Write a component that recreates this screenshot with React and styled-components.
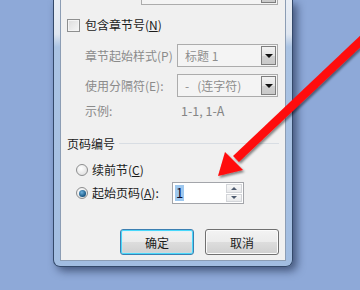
import React from 'react';
import styled, { createGlobalStyle } from 'styled-components';

const GlobalStyle = createGlobalStyle`
    html, body {
        margin: 0;
        padding: 0;
    }
    body {
        font-family: "Microsoft YaHei", "Noto Sans CJK SC", "Noto Sans", sans-serif;
        font-size: 12px;
    }
`;

const Desktop = styled.div`
    position: relative;
    width: 360px;
    height: 290px;
    overflow: hidden;
    background: #8ea9d8;
    padding-left: 53px;
    box-sizing: border-box;
    display: flex;
    align-items: flex-start;
`;

const Window = styled.div`
    width: 240px;
    height: 267px;
    box-sizing: border-box;
    border: 1px solid #34496a;
    border-top: none;
    border-radius: 0 0 7px 7px;
    padding: 0 6px 5px;
    background: linear-gradient(180deg, #e9eef5 0, #dfe6f0 34px, #aac3e3 47px, #a2bde1 100%);
    box-shadow: 4px 4px 9px rgba(10, 20, 50, 0.55);
`;

const Panel = styled.div`
    height: 261px;
    box-sizing: border-box;
    background: #f0f0f0;
    border: 1px solid #8c9db4;
    border-top: none;
    padding: 0 6px;
    display: flex;
    flex-direction: column;
    overflow: hidden;
    color: #1b1b1b;
`;

const Combo = styled.div`
    box-sizing: border-box;
    height: ${({ $h }) => $h || 23}px;
    width: ${({ $w }) => ($w ? `${$w}px` : 'auto')};
    margin-left: ${({ $ml }) => $ml || 0}px;
    margin-top: ${({ $mt }) => $mt || 0}px;
    border: 1px solid #acacac;
    background: #f4f4f4;
    color: #8e8e8e;
    display: flex;
    align-items: center;
    justify-content: space-between;
    padding-left: 7px;
    line-height: 1;
`;

const DropButton = styled.div`
    width: 15px;
    align-self: stretch;
    margin: 1px;
    box-sizing: border-box;
    border: 1px solid #7e7e7e;
    background: linear-gradient(180deg, #f2f2f2 0%, #e4e4e4 50%, #d0d0d0 51%, #c9c9c9 100%);
    display: flex;
    align-items: center;
    justify-content: center;

    &::after {
        content: '';
        border-left: 4px solid transparent;
        border-right: 4px solid transparent;
        border-top: 4px solid #111;
    }
`;

const CheckRow = styled.label`
    display: flex;
    align-items: center;
    gap: 5px;
    height: 16px;
    margin-top: 12px;
`;

const CheckBox = styled.span`
    width: 13px;
    height: 13px;
    box-sizing: border-box;
    border: 1px solid #8e8f8f;
    background: linear-gradient(135deg, #dcdcdc, #f6f6f6);
    box-shadow: inset 0 0 0 1px #f4f4f4;
`;

const FieldGrid = styled.div`
    display: grid;
    grid-template-columns: 92px 101px;
    grid-template-rows: 23px 23px 16px;
    row-gap: 7px;
    align-items: center;
    padding-left: 18px;
    margin-top: 11px;

    & > :nth-child(n + 5) {
        margin-top: -2px;
    }
`;

const Label = styled.span`
    color: ${({ $disabled }) => ($disabled ? '#8b8b8b' : '#1b1b1b')};
    width: ${({ $w }) => ($w ? `${$w}px` : 'auto')};
    white-space: nowrap;
    line-height: 16px;
`;

const Example = styled.span`
    color: #858585;
    padding-left: 4px;
    line-height: 16px;
    font-size: 12.5px;
`;

const GroupHeader = styled.div`
    display: flex;
    align-items: center;
    gap: 4px;
    height: 16px;
    margin-top: 15px;

    &::after {
        content: '';
        flex: 1;
        height: 1px;
        background: #d8dde3;
    }
`;

const RadioRow = styled.label`
    display: flex;
    align-items: center;
    gap: 4px;
    padding-left: 9px;
    height: ${({ $h }) => $h || 16}px;
    margin-top: ${({ $mt }) => $mt || 0}px;
`;

const Radio = styled.span`
    width: 12px;
    height: 12px;
    box-sizing: border-box;
    border-radius: 50%;
    border: 1px solid #8d8e8f;
    background: radial-gradient(circle at 40% 35%, #ffffff, #d9d9d9);
    display: flex;
    align-items: center;
    justify-content: center;

    &::after {
        content: '';
        display: ${({ $checked }) => ($checked ? 'block' : 'none')};
        width: 7px;
        height: 7px;
        border-radius: 50%;
        background: radial-gradient(circle at 40% 35%, #6fb2de, #1b5a88 65%, #163f63);
    }
`;

const Spin = styled.div`
    width: 72px;
    height: 22px;
    box-sizing: border-box;
    border: 1px solid #a3a5aa;
    background: #fff;
    display: flex;
    align-items: center;
    justify-content: space-between;
    padding-left: 2px;
`;

const Selected = styled.span`
    background: #9ec8ef;
    color: #0a0a2a;
    line-height: 16px;
    padding: 0 1px;
    font-size: 13px;
`;

const SpinButtons = styled.div`
    align-self: stretch;
    width: 16px;
    margin: 1px;
    display: flex;
    flex-direction: column;
    gap: 1px;
`;

const SpinButton = styled.div`
    flex: 1;
    box-sizing: border-box;
    border: 1px solid #d3d5d9;
    background: linear-gradient(180deg, #f7f7f7, #e9eaec);
    display: flex;
    align-items: center;
    justify-content: center;

    &::after {
        content: '';
        border-left: 3px solid transparent;
        border-right: 3px solid transparent;
        ${({ $up }) => ($up ? 'border-bottom: 3px solid #4d5a6e;' : 'border-top: 3px solid #4d5a6e;')}
    }
`;

const ButtonRow = styled.div`
    display: flex;
    justify-content: flex-end;
    gap: 11px;
    margin-top: 25px;
`;

const Button = styled.button`
    width: 74px;
    height: 26px;
    box-sizing: border-box;
    font: inherit;
    color: #1b1b1b;
    border-radius: 3px;
    border: 1px solid ${({ $primary }) => ($primary ? '#3c7fb1' : '#707070')};
    background: linear-gradient(180deg, #f3f3f3 0%, #ebebeb 50%, #dddddd 51%, #cfcfcf 100%);
    box-shadow: ${({ $primary }) =>
        $primary ? 'inset 0 0 0 1px #48d8fb, inset 0 0 2px 1px #c4ebf9' : 'inset 0 0 0 1px #fbfbfb'};
    padding: 0;
`;

const U = styled.span`
    text-decoration: underline;
    text-underline-offset: 1px;
`;

const Annotation = styled.svg`
    position: absolute;
    left: 0;
    top: 0;
    pointer-events: none;
`;

function RedArrow() {
    return (
        <Annotation width="360" height="290" viewBox="0 0 360 290">
            <defs>
                <filter id="shadow" x="-20%" y="-20%" width="140%" height="140%">
                    <feDropShadow dx="1.5" dy="2" stdDeviation="1.2" floodColor="#000" floodOpacity="0.45" />
                </filter>
            </defs>
            <g filter="url(#shadow)" fill="#ff0a0a" stroke="none">
                <line x1="368" y1="34" x2="236" y2="159" stroke="#ff0a0a" strokeWidth="8.5" />
                <polygon points="218,176 225,152 243,170" />
            </g>
        </Annotation>
    );
}

export default function App() {
    return (
        <>
            <GlobalStyle />
            <Desktop>
                <Window>
                    <Panel>
                        <Combo $h={22} $w={137} $ml={74} $mt={-17}>
                            <span />
                            <DropButton />
                        </Combo>

                        <CheckRow>
                            <CheckBox />
                            <Label>
                                包含章节号(<U>N</U>)
                            </Label>
                        </CheckRow>

                        <FieldGrid>
                            <Label $disabled>章节起始样式(P)</Label>
                            <Combo>
                                <span>标题 1</span>
                                <DropButton />
                            </Combo>
                            <Label $disabled>使用分隔符(E):</Label>
                            <Combo>
                                <span>-&nbsp;&nbsp;&nbsp;(连字符)</span>
                                <DropButton />
                            </Combo>
                            <Label $disabled>示例:</Label>
                            <Example>1-1, 1-A</Example>
                        </FieldGrid>

                        <GroupHeader>页码编号</GroupHeader>

                        <RadioRow $mt={11}>
                            <Radio />
                            <Label>
                                续前节(<U>C</U>)
                            </Label>
                        </RadioRow>
                        <RadioRow $mt={4} $h={22}>
                            <Radio $checked />
                            <Label $w={76}>
                                起始页码(<U>A</U>):
                            </Label>
                            <Spin>
                                <Selected>1</Selected>
                                <SpinButtons>
                                    <SpinButton $up />
                                    <SpinButton />
                                </SpinButtons>
                            </Spin>
                        </RadioRow>

                        <ButtonRow>
                            <Button $primary>确定</Button>
                            <Button>取消</Button>
                        </ButtonRow>
                    </Panel>
                </Window>
                <RedArrow />
            </Desktop>
        </>
    );
}
